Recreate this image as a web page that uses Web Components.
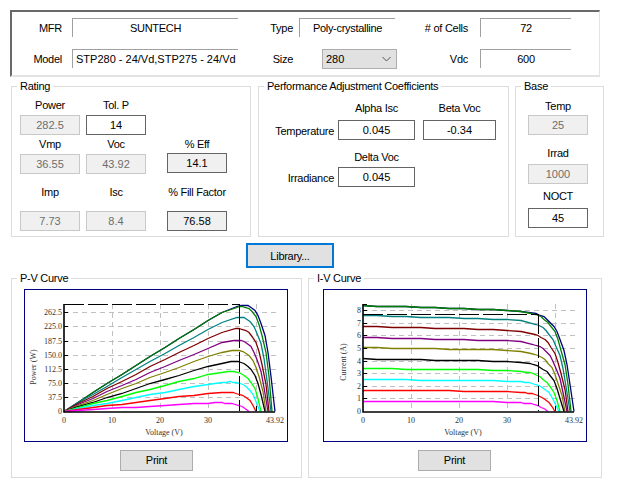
<!DOCTYPE html>
<html>
<head>
<meta charset="utf-8">
<title>PV Module</title>
<style>
  html, body { margin: 0; background: #fff; }
</style>
</head>
<body>
<pv-app></pv-app>
<script>
(() => {
  class PvField extends HTMLElement {
    connectedCallback() {
      if (this.shadowRoot) return;
      const shadow = this.attachShadow({ mode: 'open' });
      shadow.innerHTML = `
        <style>
          :host { display: flex; align-items: center; justify-content: center; box-sizing: border-box; height: 20px; border: 1px solid #646464; background: #fff; color: #000; letter-spacing: 0; }
          :host([kind="off"]) { border: 1px solid #c8c8c8; background: #f0f0f0; color: #6d6d6d; }
          :host([kind="calc"]) { background: #f0f0f0; }
          :host([kind="sunk"]) { height: 19px; border: 0; border-top: 1px solid #a0a0a0; border-left: 1px solid #a0a0a0; letter-spacing: -0.3px; }
          :host([align="left"]) { justify-content: flex-start; padding-left: 3px; white-space: nowrap; letter-spacing: 0; }
        </style>
        <slot></slot>
      `;
    }
  }

  class PvSelect extends HTMLElement {
    connectedCallback() {
      if (this.shadowRoot) return;
      const shadow = this.attachShadow({ mode: 'open' });
      shadow.innerHTML = `
        <style>
          :host { display: flex; align-items: center; justify-content: space-between; box-sizing: border-box; height: 20px; padding: 0 5px 0 3px; border: 1px solid #adadad; background: #e1e1e1; letter-spacing: 0; }
          svg { display: block; }
        </style>
        <slot></slot>
        <svg width="9" height="6" viewBox="0 0 9 6"><path d="M.5 1l4 4 4-4" fill="none" stroke="#555"/></svg>
      `;
    }
  }

  class PvButton extends HTMLElement {
    connectedCallback() {
      if (this.shadowRoot) return;
      const shadow = this.attachShadow({ mode: 'open' });
      shadow.innerHTML = `
        <style>
          :host { display: flex; align-items: center; justify-content: center; box-sizing: border-box; width: 73px; height: 21px; padding-bottom: 1px; border: 1px solid #adadad; background: #e1e1e1; }
          :host([focused]) { width: 88px; height: 25px; padding-bottom: 0; border: 2px solid #0078d7; }
        </style>
        <slot></slot>
      `;
    }
  }

  class PvGroup extends HTMLElement {
    connectedCallback() {
      if (this.shadowRoot) return;
      const shadow = this.attachShadow({ mode: 'open' });
      shadow.innerHTML = `
        <style>
          :host { display: block; position: relative; box-sizing: border-box; border: 1px solid #dcdcdc; }
          .legend { position: absolute; top: -8px; left: 5px; padding: 0 3px; background: #fff; line-height: 14px; white-space: nowrap; }
        </style>
        <div class="legend"></div>
        <slot></slot>
      `;
      shadow.querySelector('.legend').textContent = this.getAttribute('label');
    }
  }

  // Module model shared by both charts, one entry per irradiance step
  const SERIES = [
    ['#000080', 8.4, 43.92, 2.2],
    ['#008000', 8.4, 43.4, 2.2],
    ['#008080', 7.62, 43.05, 2.2],
    ['#800000', 6.75, 42.75, 2.2],
    ['#800080', 5.87, 42.4, 2.2],
    ['#808000', 5.08, 42.1, 2.2],
    ['#000000', 4.17, 41.8, 2.2],
    ['#00ff00', 3.41, 41.1, 2.2],
    ['#00ffff', 2.54, 40.8, 2.2],
    ['#ff0000', 1.67, 40.05, 2.2],
    ['#ff00ff', 0.79, 38.5, 2.2]
  ];
  const X0 = 40;
  const Y0 = 122;
  const PX_PER_V = 4.8;

  function current(s, v) {
    return s[1] * (1 - 0.0014 * v) * (1 - Math.exp((v - s[2]) / s[3]));
  }

  function samples(voc) {
    const out = [];
    for (let v = 0; v < voc - 7; v += 3) out.push(v);
    for (let v = voc - 7; v < voc; v += 0.7) out.push(v);
    out.push(voc);
    return out;
  }

  class PvCurve extends HTMLElement {
    connectedCallback() {
      if (this.shadowRoot) return;
      const mode = this.getAttribute('mode');
      const isPower = mode === 'pv';
      const yScale = isPower ? 14.1 / 37.5 : 12.6;
      const yTicks = isPower
        ? ['0', '37.5', '75.0', '112.5', '150.0', '187.5', '225.0', '262.5'].map((t) => [t, parseFloat(t)])
        : [0, 1, 2, 3, 4, 5, 6, 7, 8].map((n) => [String(n), n]);
      const yOf = (val) => Math.round(Y0 - val * yScale);
      const xOf = (v) => Math.round(X0 + v * PX_PER_V);
      const vmp = xOf(36.55);
      const mpY = isPower ? Y0 - 107 : yOf(7.73);
      const right = 252;

      let grid = '';
      let labels = '';
      let ticks = '';
      yTicks.forEach(([t, val]) => {
        const y = yOf(val);
        if (val > 0) grid += `<path d="M${X0} ${y + 0.5}H${right}"/>`;
        if (val > 0) ticks += `<path d="M${X0} ${y + 0.5}h4"/>`;
        labels += `<text x="${X0 - 2}" y="${y + 3}" text-anchor="end">${t}</text>`;
      });
      [10, 20, 30, 40].forEach((v) => {
        grid += `<path d="M${xOf(v) + 0.5} ${Y0 - 107}V${Y0}"/>`;
        if (v < 40) labels += `<text x="${xOf(v)}" y="134" text-anchor="middle">${v}</text>`;
      });
      ticks += `<path d="M${xOf(40) + 0.5} ${Y0 - 5}V${Y0}"/><path d="M${X0} ${Y0 - 107 + 0.5}h4"/>`;
      labels += `<text x="${X0}" y="134" text-anchor="middle">0</text>`;
      labels += `<text x="${xOf(43.92)}" y="134" text-anchor="middle">43.92</text>`;

      const lines = SERIES.map((s) => {
        const pts = samples(s[2]).map((v) => {
          const i = Math.max(0, current(s, v));
          return `${xOf(v)},${yOf(isPower ? i * v : i) + 0.5}`;
        }).join(' ');
        return `<polyline points="${pts}" stroke="${s[0]}"/>`;
      }).join('');

      const shadow = this.attachShadow({ mode: 'open' });
      shadow.innerHTML = `
        <style>
          :host { display: block; width: 264px; height: 153px; letter-spacing: 0; }
          svg { display: block; }
          text { font: 8px "Liberation Serif", serif; fill: #333; }
          .grid path { stroke: #c0c0c0; stroke-dasharray: 5 4; fill: none; }
          .curves polyline { fill: none; stroke-width: 1.3; }
          .ticks path { stroke: #000; stroke-width: 1; fill: none; }
          .mp path { stroke: #000; stroke-width: 1.5; stroke-dasharray: 20 4; fill: none; shape-rendering: crispEdges; }
        </style>
        <svg width="264" height="153" viewBox="0 0 264 153">
          <rect x="0.5" y="0.5" width="263" height="152" fill="#fff" stroke="#000080"/>
          <g class="grid">${grid}</g>
          <g class="curves">${lines}</g>
          <g class="mp"><path d="M${X0} ${mpY + 0.5}H${vmp}"/><path d="M${vmp + 0.5} ${mpY}V${Y0}"/></g>
          <g class="ticks">${ticks}</g>
          <path d="M${X0} ${Y0 - 107}V${Y0 + 1}H${xOf(43.92)}" fill="none" stroke="#000" stroke-width="1.6"/>
          ${labels}
          <text x="${X0 + 100}" y="146" text-anchor="middle">Voltage (V)</text>
          <text transform="translate(${isPower ? 12 : 23} ${isPower ? 78 : 73}) rotate(-90)" text-anchor="middle">${isPower ? 'Power (W)' : 'Current (A)'}</text>
        </svg>
      `;
    }
  }

  class PvApp extends HTMLElement {
    connectedCallback() {
      if (this.shadowRoot) return;
      const shadow = this.attachShadow({ mode: 'open' });
      shadow.innerHTML = `
        <style>
          :host { display: block; width: 617px; height: 486px; padding-top: 10px; box-sizing: border-box; font: 11px/14px "Liberation Sans", Arial, sans-serif; letter-spacing: -0.27px; color: #000; }
          .top { box-sizing: border-box; width: 590px; height: 67px; margin-left: 10px; padding-top: 6px; border-top: 2px solid #696969; border-left: 2px solid #696969; border-right: 1px solid #e3e3e3; border-bottom: 2px solid #e3e3e3; display: grid; grid-template-columns: 50px 10px 166px 55px 6px 98px 71px 12px 91px; grid-template-rows: 19px 19px; row-gap: 12px; align-items: center; }
          .r { text-align: right; white-space: nowrap; }
          .c { text-align: center; white-space: nowrap; }
          .f3 { grid-column: 3; }
          .l1 { grid-column: 1; }
          .l4 { grid-column: 4; }
          .f6 { grid-column: 6; }
          .l7 { grid-column: 7; }
          .f9 { grid-column: 9; }
          .type { width: 96px; }
          pv-select { justify-self: end; width: 75px; align-self: start; }
          .mid { display: flex; margin: 9px 0 0 11px; height: 151px; }
          .rating { width: 240px; margin-right: 7px; }
          .perf { width: 251px; margin-right: 6px; }
          .base { width: 89px; }
          .grid { display: grid; align-items: center; box-sizing: border-box; padding-top: 9px; }
          .rating .grid { padding-left: 8px; grid-template-columns: 60px 60px 75px; column-gap: 6px; grid-template-rows: 19px 20px 19px 20px 37px 20px; }
          .rating .c { padding-bottom: 2px; }
          .col3 { grid-column: 3; }
          .rating .col3 { margin-left: 15px; }
          .up { margin-top: -2px; }
          .perf .grid { grid-template-columns: 75px 77px 77px; column-gap: 4px; grid-template-rows: 24px 20px 27px 20px; }
          .perf .b { margin-left: 4px; }
          .low { margin: 0 0 3px; align-self: end; }
          .base .low { margin-bottom: 4px; }
          .dn { padding-top: 2px; }
          .base .grid { padding-left: 12px; grid-template-columns: 60px; grid-template-rows: 19px 20px 29px 20px 24px 20px; }
          .lib { margin: 6px 0 0 246px; }
          .charts { display: flex; gap: 6px; margin: 10px 0 0 11px; height: 200px; }
          .pv { width: 291px; box-sizing: border-box; padding: 10px 0 0 12px; }
          .iv { width: 294px; box-sizing: border-box; padding: 10px 0 0 14px; }
          .pv pv-button { margin: 8px 0 0 96px; }
          .iv pv-button { margin: 8px 0 0 95px; }
        </style>
        <div class="top">
          <div class="r l1">MFR</div>
          <pv-field class="f3" kind="sunk">SUNTECH</pv-field>
          <div class="r l4">Type</div>
          <pv-field class="f6 type" kind="sunk">Poly-crystalline</pv-field>
          <div class="r l7"># of Cells</div>
          <pv-field class="f9" kind="sunk">72</pv-field>
          <div class="r l1">Model</div>
          <pv-field class="f3" kind="sunk" align="left">STP280 - 24/Vd,STP275 - 24/Vd</pv-field>
          <div class="r l4">Size</div>
          <pv-select class="f6">280</pv-select>
          <div class="r l7">Vdc</div>
          <pv-field class="f9" kind="sunk">600</pv-field>
        </div>
        <div class="mid">
          <pv-group class="rating" label="Rating">
            <div class="grid">
              <div class="c">Power</div><div class="c">Tol. P</div><div></div>
              <pv-field kind="off">282.5</pv-field><pv-field>14</pv-field><div></div>
              <div class="c">Vmp</div><div class="c">Voc</div><div class="c col3">% Eff</div>
              <pv-field kind="off">36.55</pv-field><pv-field kind="off">43.92</pv-field><pv-field class="col3 up" kind="calc">14.1</pv-field>
              <div class="c">Imp</div><div class="c">Isc</div><div class="c col3">% Fill Factor</div>
              <pv-field kind="off">7.73</pv-field><pv-field kind="off">8.4</pv-field><pv-field class="col3" kind="calc">76.58</pv-field>
            </div>
          </pv-group>
          <pv-group class="perf" label="Performance Adjustment Coefficients">
            <div class="grid">
              <div></div><div class="c">Alpha Isc</div><div class="c b">Beta Voc</div>
              <div class="r dn">Temperature</div><pv-field>0.045</pv-field><pv-field class="b">-0.34</pv-field>
              <div></div><div class="c low">Delta Voc</div><div></div>
              <div class="r dn">Irradiance</div><pv-field>0.045</pv-field><div></div>
            </div>
          </pv-group>
          <pv-group class="base" label="Base">
            <div class="grid">
              <div class="c">Temp</div>
              <pv-field kind="off">25</pv-field>
              <div class="c low">Irrad</div>
              <pv-field kind="off">1000</pv-field>
              <div class="c">NOCT</div>
              <pv-field>45</pv-field>
            </div>
          </pv-group>
        </div>
        <pv-button class="lib" focused>Library...</pv-button>
        <div class="charts">
          <pv-group class="pv" label="P-V Curve">
            <pv-curve mode="pv"></pv-curve>
            <pv-button>Print</pv-button>
          </pv-group>
          <pv-group class="iv" label="I-V Curve">
            <pv-curve mode="iv"></pv-curve>
            <pv-button>Print</pv-button>
          </pv-group>
        </div>
      `;
    }
  }

  customElements.define('pv-field', PvField);
  customElements.define('pv-select', PvSelect);
  customElements.define('pv-button', PvButton);
  customElements.define('pv-group', PvGroup);
  customElements.define('pv-curve', PvCurve);
  customElements.define('pv-app', PvApp);
})();
</script>
</body>
</html>
